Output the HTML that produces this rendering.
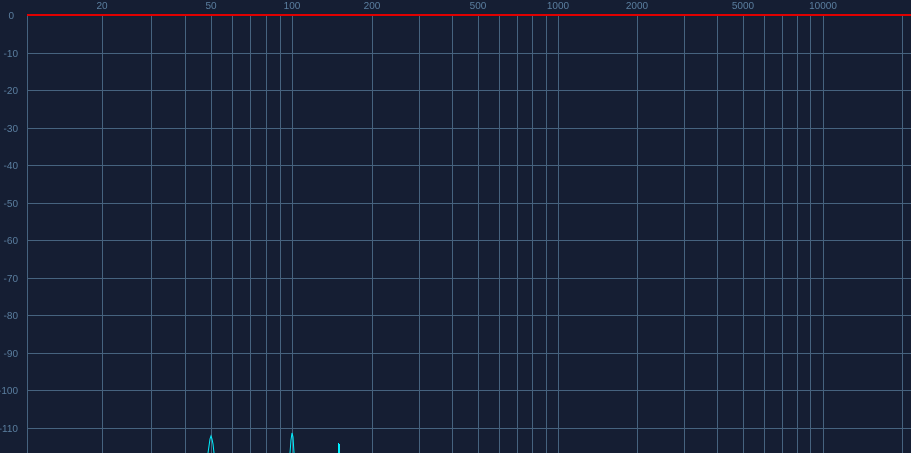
<!DOCTYPE html>
<html><head><style>
html,body{margin:0;padding:0;background:#151e33;width:911px;height:453px;overflow:hidden}
svg{display:block}
text{font-family:"Liberation Sans",sans-serif;font-size:10px;fill:#5b7fa0}
</style></head><body>
<svg width="911" height="453" xmlns="http://www.w3.org/2000/svg">
<rect width="911" height="453" fill="#151e33"/>
<g stroke="#46637f" stroke-width="1">
<line x1="27.5" y1="15" x2="27.5" y2="453"/>
<line x1="102.5" y1="15" x2="102.5" y2="453"/>
<line x1="151.5" y1="15" x2="151.5" y2="453"/>
<line x1="185.5" y1="15" x2="185.5" y2="453"/>
<line x1="211.5" y1="15" x2="211.5" y2="453"/>
<line x1="232.5" y1="15" x2="232.5" y2="453"/>
<line x1="250.5" y1="15" x2="250.5" y2="453"/>
<line x1="266.5" y1="15" x2="266.5" y2="453"/>
<line x1="280.5" y1="15" x2="280.5" y2="453"/>
<line x1="292.5" y1="15" x2="292.5" y2="453"/>
<line x1="372.5" y1="15" x2="372.5" y2="453"/>
<line x1="419.5" y1="15" x2="419.5" y2="453"/>
<line x1="452.5" y1="15" x2="452.5" y2="453"/>
<line x1="478.5" y1="15" x2="478.5" y2="453"/>
<line x1="499.5" y1="15" x2="499.5" y2="453"/>
<line x1="517.5" y1="15" x2="517.5" y2="453"/>
<line x1="532.5" y1="15" x2="532.5" y2="453"/>
<line x1="546.5" y1="15" x2="546.5" y2="453"/>
<line x1="558.5" y1="15" x2="558.5" y2="453"/>
<line x1="637.5" y1="15" x2="637.5" y2="453"/>
<line x1="684.5" y1="15" x2="684.5" y2="453"/>
<line x1="717.5" y1="15" x2="717.5" y2="453"/>
<line x1="743.5" y1="15" x2="743.5" y2="453"/>
<line x1="764.5" y1="15" x2="764.5" y2="453"/>
<line x1="782.5" y1="15" x2="782.5" y2="453"/>
<line x1="797.5" y1="15" x2="797.5" y2="453"/>
<line x1="810.5" y1="15" x2="810.5" y2="453"/>
<line x1="823.5" y1="15" x2="823.5" y2="453"/>
<line x1="902.5" y1="15" x2="902.5" y2="453"/>
<line x1="28" y1="53.5" x2="911" y2="53.5"/>
<line x1="28" y1="90.5" x2="911" y2="90.5"/>
<line x1="28" y1="128.5" x2="911" y2="128.5"/>
<line x1="28" y1="165.5" x2="911" y2="165.5"/>
<line x1="28" y1="203.5" x2="911" y2="203.5"/>
<line x1="28" y1="240.5" x2="911" y2="240.5"/>
<line x1="28" y1="278.5" x2="911" y2="278.5"/>
<line x1="28" y1="315.5" x2="911" y2="315.5"/>
<line x1="28" y1="353.5" x2="911" y2="353.5"/>
<line x1="28" y1="390.5" x2="911" y2="390.5"/>
<line x1="28" y1="428.5" x2="911" y2="428.5"/>
</g>
<rect x="27" y="14" width="884" height="2" fill="#e00000"/>
<g text-anchor="middle">
<text x="102" y="9">20</text>
<text x="211" y="9">50</text>
<text x="292" y="9">100</text>
<text x="372" y="9">200</text>
<text x="478" y="9">500</text>
<text x="558" y="9">1000</text>
<text x="637" y="9">2000</text>
<text x="743" y="9">5000</text>
<text x="823" y="9">10000</text>
</g>
<g text-anchor="end">
<text x="14" y="19">0</text>
<text x="18" y="57">-10</text>
<text x="18" y="94">-20</text>
<text x="18" y="132">-30</text>
<text x="18" y="169">-40</text>
<text x="18" y="207">-50</text>
<text x="18" y="244">-60</text>
<text x="18" y="282">-70</text>
<text x="18" y="319">-80</text>
<text x="18" y="357">-90</text>
<text x="18" y="394">-100</text>
<text x="18" y="432">-110</text>
</g>
<g fill="none" stroke="#00f0ff" stroke-width="1">
<path d="M208 453 L209 446 L210 439 L211 436 L212 439 L213 444 L214 453"/>
<path d="M290 453 L291 440 L292 433 L293 437 L294 453"/>
</g>
<rect x="338" y="443" width="1" height="10" fill="#00f0ff"/>
<rect x="339" y="444" width="1" height="9" fill="#00f0ff"/>
</svg>
</body></html>
